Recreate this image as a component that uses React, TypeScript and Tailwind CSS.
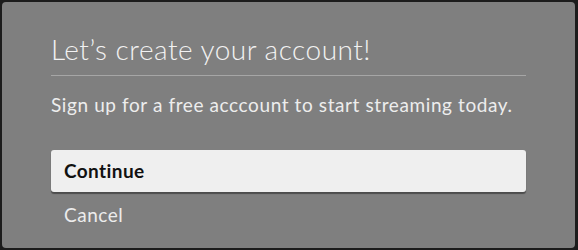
export default function App() {
  return (
    <div className="w-[578px] h-[250px] bg-[#1c1c1c] pt-[2px] pl-[2px] pr-[3px] pb-[2px]" style={{ fontFamily: "Lato, 'Open Sans', sans-serif" }}>
      <div className="h-full bg-[#7f7f7f] rounded-[4px] px-[49px] flex flex-col">
        <h1 className="mt-[29px] text-[28px] leading-[36px] font-light text-[#f2f2f2] tracking-[0.5px]">Let’s create your account!</h1>
        <div className="mt-[8px] h-px bg-[#a6a6a6]" />
        <p className="mt-[17px] text-[19px] leading-[24px] font-normal text-[#ededed] tracking-[0.6px]">
          Sign up for a free acccount to start streaming today.
        </p>
        <button className="mt-[33px] h-[42px] bg-[#efefef] rounded-[3px] shadow-[0_2px_1px_rgba(0,0,0,0.4)] text-left pl-[13px] text-[19px] font-bold text-[#111] tracking-[0.4px]">
          Continue
        </button>
        <div className="mt-[8px] pl-[13px] text-[19px] leading-[30px] text-[#ececec] tracking-[0.5px]">Cancel</div>
      </div>
    </div>
  )
}
